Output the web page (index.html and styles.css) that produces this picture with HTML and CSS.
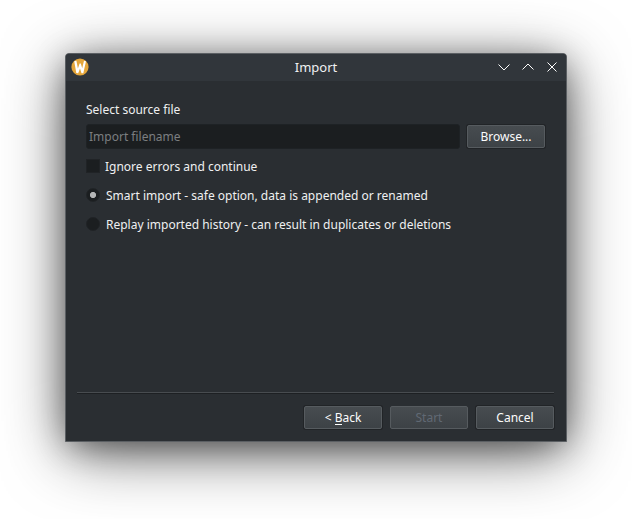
FILE: index.html
```html
<!DOCTYPE html>
<html lang="en">
<head>
<meta charset="utf-8">
<title>Import</title>
<link rel="stylesheet" href="styles.css">
</head>
<body>
<main class="window">
  <header class="titlebar">
    <svg class="logo" viewBox="0 0 18 18"><circle cx="9" cy="9" r="8.6" fill="#e5a63a"/><path d="M3.2 3.2 5.4 2.8 6.9 10.4 8.6 5.4 9.8 5.4 11.2 10.2 13 2.7 15 3.3 12.3 15.2 10.5 15.3 9 10.5 7.2 15.2 5.3 15Z" fill="#fff"/></svg>
    <h1 class="title">Import</h1>
    <div class="controls">
      <svg viewBox="0 0 12 12"><path d="M.5 3.5 6 9 11.5 3.5"/></svg>
      <svg viewBox="0 0 12 12"><path d="M.5 8.5 6 3 11.5 8.5"/></svg>
      <svg viewBox="0 0 12 12"><path d="M1.5 1.5 10.5 10.5M10.5 1.5 1.5 10.5"/></svg>
    </div>
  </header>
  <section class="content">
    <div class="label">Select source file</div>
    <div class="file-row">
      <input class="field" type="text" placeholder="Import filename">
      <button class="button">Browse...</button>
    </div>
    <div class="option check"><span class="box"></span><span>Ignore errors and continue</span></div>
    <div class="option"><span class="box round selected"></span><span>Smart import - safe option, data is appended or renamed</span></div>
    <div class="option"><span class="box round"></span><span>Replay imported history - can result in duplicates or deletions</span></div>
  </section>
  <footer class="footer">
    <button class="button"><span>&lt; <span class="key">B</span>ack</span></button>
    <button class="button disabled" disabled>Start</button>
    <button class="button">Cancel</button>
  </footer>
</main>
</body>
</html>
```
FILE: styles.css
```css
* { box-sizing: border-box; }
body {
  margin: 0;
  height: 519px;
  padding: 53px 65px;
  overflow: hidden;
  background: #fff;
  font: 12px/17px "Noto Sans", sans-serif;
  color: #eff0f1;
}
.window {
  display: flex;
  flex-direction: column;
  width: 502px;
  height: 389px;
  border: 1px solid #5b5f63;
  border-radius: 4px 4px 0 0;
  background: #2a2e32;
  box-shadow: 0 12px 64px -3px rgba(0, 0, 0, .62), 0 6px 32px -4px rgba(0, 0, 0, .45);
}
.titlebar {
  display: grid;
  grid-template-columns: 60px 1fr 60px;
  align-items: center;
  height: 27px;
  padding: 0 8px 0 5px;
  border-radius: 3px 3px 0 0;
  background: #31363b;
}
.logo { width: 18px; height: 18px; margin-bottom: 1px; }
.title {
  margin: 0;
  padding-left: 3px;
  font-size: 13px;
  font-weight: 400;
  text-align: center;
}
.controls { display: flex; gap: 12px; margin-bottom: 1px; }
.controls svg {
  flex: none;
  width: 12px;
  height: 12px;
  fill: none;
  stroke: #fcfcfc;
  stroke-width: 1;
}
.content { flex: 1; padding: 20px 20px 0; }
.label { height: 17px; }
.file-row { display: flex; align-items: center; gap: 7px; margin-top: 6px; }
.field {
  width: 374px;
  height: 25px;
  padding: 0 2px;
  border: 1px solid #1e2225;
  border-radius: 3px;
  outline: 0;
  background: #1b1e20;
  font: inherit;
}
.field::placeholder { color: #7c7e80; opacity: 1; }
.button {
  display: flex;
  align-items: center;
  justify-content: center;
  width: 78px;
  height: 23px;
  padding: 0;
  border: 1px solid #565b5f;
  border-radius: 2px;
  background: linear-gradient(#474c50, #3d4246);
  box-shadow: 0 0 0 1px #212427;
  font: inherit;
  color: #fcfcfc;
}
.disabled { box-shadow: none; color: #616974; }
.option { display: flex; align-items: center; gap: 6px; height: 17px; margin-top: 12px; }
.check { gap: 5px; margin-top: 9px; }
.box { width: 14px; height: 14px; margin-bottom: 2px; background: #1b1e20; border: 1px solid #202326; }
.round { border-radius: 50%; }
.selected { background: radial-gradient(circle, #b3b4b5 2.7px, #1b1e20 3.5px); }
.footer {
  display: flex;
  justify-content: flex-end;
  gap: 8px;
  height: 49px;
  margin: 0 12px 0 11px;
  padding-top: 13px;
  border-top: 1px solid #484c50;
  box-shadow: inset 0 1px #1d2023;
}
.key { display: inline-block; height: 16px; border-bottom: 1px solid #fcfcfc; }
```
